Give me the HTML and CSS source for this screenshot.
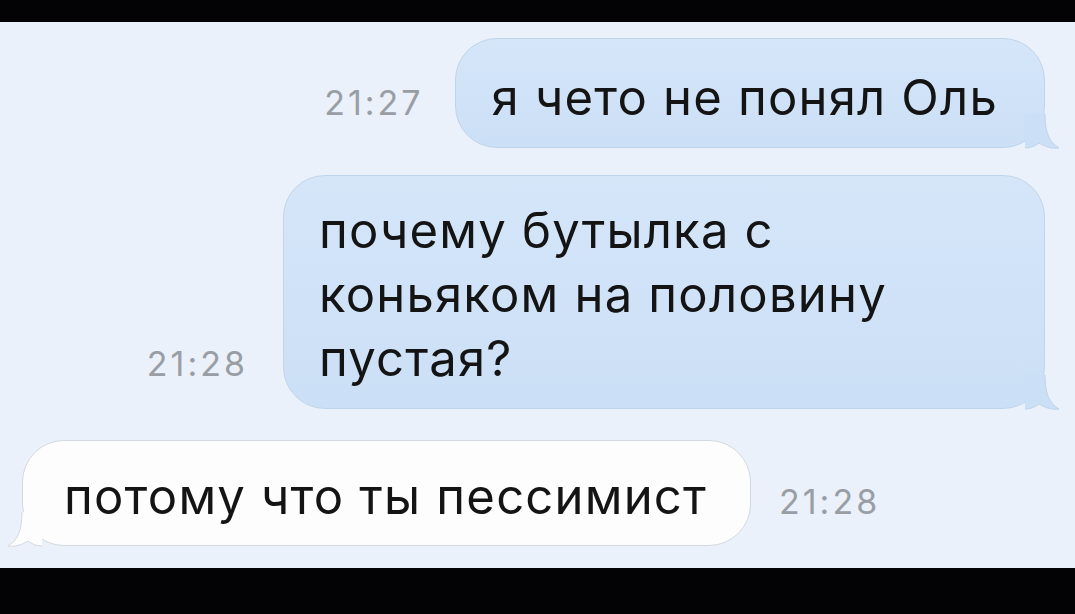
FILE: index.html
```html
<!DOCTYPE html>
<html lang="ru">
<head>
<meta charset="utf-8">
<title>Чат</title>
<link rel="stylesheet" href="styles.css">
</head>
<body>
<div class="frame">
  <div class="bar bar-top"></div>
  <div class="chat">
    <div class="row row-out row-1">
      <span class="time">21:27</span>
      <div class="bubble bubble-out bubble-one">я чето не понял Оль
        <svg class="tail tail-out" viewBox="0 0 34 34"><path class="tail-fill" d="M0 0 L20 0 C20 18 24 28 34 34 C28 35 20 33 14 29 C10 32 6 34 0 34 Z"/><path class="tail-line" d="M20 0 C20 18 24 28 34 34 C28 35 20 33 14 29 C10 32 6 34 0 34"/></svg>
      </div>
    </div>
    <div class="row row-out row-2">
      <span class="time">21:28</span>
      <div class="bubble bubble-out bubble-wide">почему бутылка с<br>коньяком на половину<br>пустая?
        <svg class="tail tail-out" viewBox="0 0 34 34"><path class="tail-fill" d="M0 0 L20 0 C20 18 24 28 34 34 C28 35 20 33 14 29 C10 32 6 34 0 34 Z"/><path class="tail-line" d="M20 0 C20 18 24 28 34 34 C28 35 20 33 14 29 C10 32 6 34 0 34"/></svg>
      </div>
    </div>
    <div class="row row-in">
      <div class="bubble bubble-in">потому что ты пессимист
        <svg class="tail tail-in" viewBox="0 0 34 34"><path class="tail-fill" d="M0 0 L20 0 C20 18 24 28 34 34 C28 35 20 33 14 29 C10 32 6 34 0 34 Z"/><path class="tail-line" d="M20 0 C20 18 24 28 34 34 C28 35 20 33 14 29 C10 32 6 34 0 34"/></svg>
      </div>
      <span class="time">21:28</span>
    </div>
  </div>
  <div class="bar bar-bottom"></div>
</div>
</body>
</html>
```
FILE: styles.css
```css
* { box-sizing: border-box; }
html, body { margin: 0; padding: 0; background: #000; }
body { font-family: Inter, "Liberation Sans", Arial, sans-serif; }

.frame {
  width: 1075px;
  height: 614px;
  display: flex;
  flex-direction: column;
  overflow: hidden;
}
.bar { background: #030306; flex: none; }
.bar-top { height: 22px; }
.bar-bottom { height: 46px; }

.chat {
  height: 546px;
  flex: none;
  background: #eaf1fa;
  padding: 16px 30px 0 22px;
  display: flex;
  flex-direction: column;
}

.row { display: flex; align-items: baseline; }
.row-out { justify-content: flex-end; gap: 31px; }
.row-1 { margin-bottom: 27px; }
.row-2 { align-items: last baseline; gap: 35px; margin-bottom: 31px; }
.row-in { justify-content: flex-start; gap: 28px; }

.time {
  font-size: 34px;
  color: #999ea5;
  letter-spacing: 3px;
}

.bubble {
  position: relative;
  font-size: 49px;
  line-height: 64px;
  letter-spacing: 1.2px;
  color: #141414;
  border-radius: 42px;
  white-space: nowrap;
}
.bubble-out {
  background: linear-gradient(#d5e6f9, #cbdff6);
  border: 1px solid #c0d4ea;
}
.bubble-one { padding: 27px 46px 17px 36px; }
.bubble-wide { width: 762px; padding: 23px 30px 17px 35px; }
.bubble-in {
  background: #fdfdfd;
  border: 1px solid #d4d9df;
  padding: 24px 43px 16px 41px;
}

.tail {
  position: absolute;
  bottom: -1px;
  width: 34px;
  height: 34px;
  overflow: visible;
}
.tail-out { right: -15px; }
.tail-in { left: -15px; transform: scaleX(-1); }
.tail-fill { stroke: none; }
.tail-line { fill: none; stroke-width: 1; }
.tail-out .tail-fill { fill: #cbdff6; }
.tail-out .tail-line { stroke: #c0d4ea; }
.tail-in .tail-fill { fill: #fdfdfd; }
.tail-in .tail-line { stroke: #d4d9df; }
```
